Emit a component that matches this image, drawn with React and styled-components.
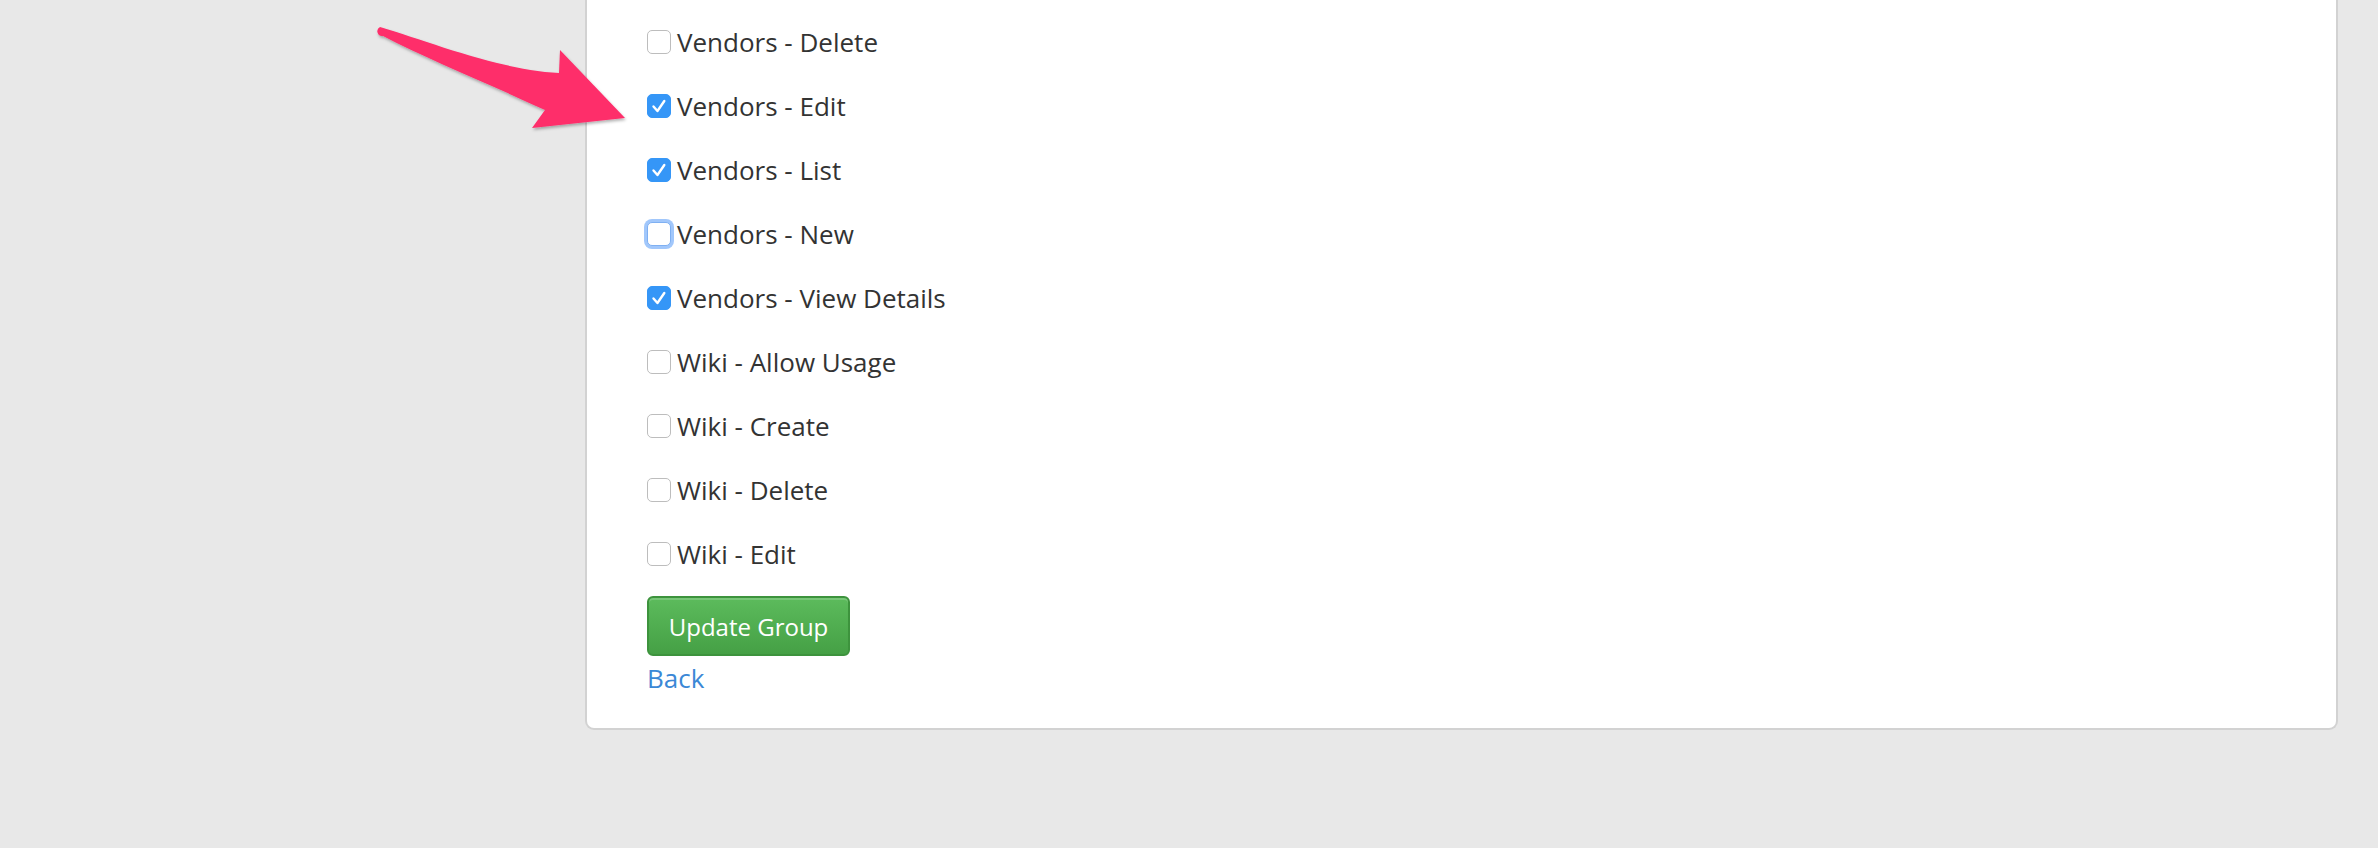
import React from 'react'
import styled, { createGlobalStyle } from 'styled-components'

const GlobalStyle = createGlobalStyle`
	html, body {
		margin: 0;
		padding: 0;
		background: #e8e8e8;
		font-family: 'Open Sans', 'Liberation Sans', sans-serif;
	}
`;

const Page = styled.div`
	position: relative;
	min-height: 848px;
	padding: 0 40px 0 585px;
	box-sizing: border-box;
`;

const Panel = styled.div`
	background: #fff;
	border: 2px solid #d2d2d2;
	border-top: none;
	border-radius: 0 0 9px 9px;
	padding: 10px 40px 32px 60px;
	display: flex;
	flex-direction: column;
	align-items: flex-start;
`;

const Row = styled.label`
	display: flex;
	align-items: center;
	height: 64px;
	gap: 6px;
	font-size: 26px;
	color: #333;
	cursor: pointer;
`;

const Box = styled.span`
	width: 24px;
	height: 24px;
	box-sizing: border-box;
	border-radius: 5px;
	display: flex;
	align-items: center;
	justify-content: center;
	background: ${p => (p.$checked ? '#3596f7' : '#fff')};
	border: ${p => (p.$checked ? '1px solid #3596f7' : p.$focus ? '1.5px solid #7fb0f2' : '1.5px solid #bdbdbd')};
	box-shadow: ${p => (p.$focus ? '0 0 0 3px rgba(130, 180, 250, 0.75)' : 'none')};
`;

const Button = styled.button`
	margin-top: 10px;
	width: 203px;
	height: 60px;
	border: 2px solid #3d933d;
	border-radius: 6px;
	background: linear-gradient(#5cbb5c, #45a045);
	box-shadow: inset 0 2px 0 rgba(255, 255, 255, 0.18);
	color: #fff;
	font-family: inherit;
	font-size: 24px;
	cursor: pointer;
`;

const BackLink = styled.a`
	margin-top: 4px;
	font-size: 26px;
	line-height: 36px;
	color: #3b88d6;
	text-decoration: none;
	&:hover {
		text-decoration: underline;
	}
`;

const Arrow = styled.svg`
	position: absolute;
	left: 0;
	top: 0;
	pointer-events: none;
`;

const permissions = [
	{ name: 'Vendors - Delete' },
	{ name: 'Vendors - Edit', checked: true },
	{ name: 'Vendors - List', checked: true },
	{ name: 'Vendors - New', focus: true },
	{ name: 'Vendors - View Details', checked: true },
	{ name: 'Wiki - Allow Usage' },
	{ name: 'Wiki - Create' },
	{ name: 'Wiki - Delete' },
	{ name: 'Wiki - Edit' },
];

function Check() {
	return (
		<svg width='24' height='24' viewBox='0 0 24 24'>
			<path d='M6 12.5 L10.3 17.5 L17.8 6.5' fill='none' stroke='#fff' strokeWidth='2.6' strokeLinecap='round' strokeLinejoin='round' />
		</svg>
	)
}

export default function App() {
	return (
		<Page>
			<GlobalStyle />
			<Panel>
				{permissions.map(p => (
					<Row key={p.name}>
						<Box $checked={p.checked} $focus={p.focus}>
							{p.checked && <Check />}
						</Box>
						{p.name}
					</Row>
				))}
				<Button>Update Group</Button>
				<BackLink href='#'>Back</BackLink>
			</Panel>
			<Arrow width='700' height='160' viewBox='0 0 700 160'>
				<defs>
					<filter id='shade' x='-10%' y='-10%' width='130%' height='140%'>
						<feDropShadow dx='1' dy='2' stdDeviation='1.5' floodColor='#000' floodOpacity='0.3' />
					</filter>
				</defs>
				<path
					d='M380 27 C430 42 500 70 559 73 L560 50 L625 118 L532 128 L545 110 C480 80 425 58 383 36 A4.8 4.8 0 0 1 380 27 Z'
					fill='#fe2d6b'
					filter='url(#shade)'
				/>
			</Arrow>
		</Page>
	)
}
